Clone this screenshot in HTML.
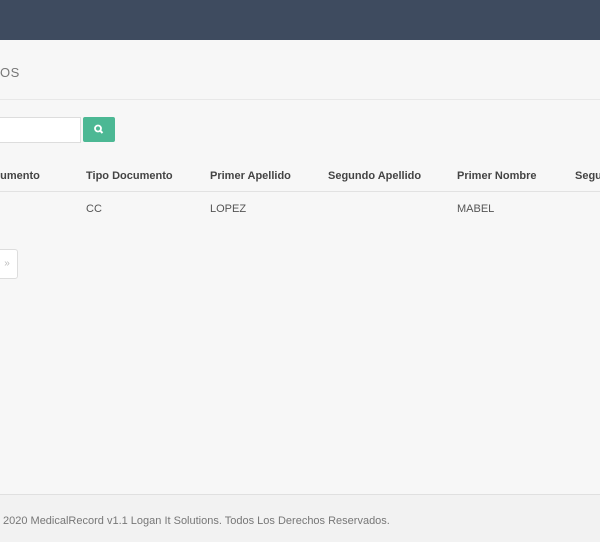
<!DOCTYPE html>
<html><head><style>
body{margin:0;width:600px;height:541px;overflow:hidden;background:#f7f7f7;font-family:"Liberation Sans",sans-serif;position:relative;color:#555}
.top{position:absolute;left:0;top:0;width:600px;height:40px;background:#3e4b5f}
.t{position:absolute;white-space:nowrap;font-size:11px}
</style></head><body>
<div class="top"></div>
<div class="t" style="left:0;top:65px;font-size:13px;color:#777;letter-spacing:0.5px">OS</div>
<div style="position:absolute;left:0;top:99px;width:600px;height:1px;background:#e8e8e8"></div>
<div style="position:absolute;left:-2px;top:117px;width:81px;height:24px;background:#fff;border:1px solid #ddd"></div>
<div style="position:absolute;left:83px;top:117px;width:32px;height:25px;background:#4cb894;border-radius:2px">
<svg width="32" height="25" viewBox="0 0 32 25"><circle cx="15" cy="11.5" r="3" fill="none" stroke="#fff" stroke-width="1.8"/><line x1="17.2" y1="13.7" x2="19.5" y2="16" stroke="#fff" stroke-width="2"/></svg></div>
<div class="t" style="left:-6px;top:170px;font-weight:bold;color:#444">cumento</div>
<div class="t" style="left:86px;top:170px;font-weight:bold;color:#444">Tipo Documento</div>
<div class="t" style="left:210px;top:170px;font-weight:bold;color:#444">Primer Apellido</div>
<div class="t" style="left:328px;top:170px;font-weight:bold;color:#444">Segundo Apellido</div>
<div class="t" style="left:457px;top:170px;font-weight:bold;color:#444">Primer Nombre</div>
<div class="t" style="left:575px;top:170px;font-weight:bold;color:#444">Segundo</div>
<div style="position:absolute;left:0;top:191px;width:600px;height:1px;background:#e2e2e2"></div>
<div class="t" style="left:86px;top:203px">CC</div>
<div class="t" style="left:210px;top:203px">LOPEZ</div>
<div class="t" style="left:457px;top:203px">MABEL</div>
<div style="position:absolute;left:-4px;top:249px;width:20px;height:28px;background:#fff;border:1px solid #ddd;border-radius:0 3px 3px 0;color:#bbb;font-size:10px;line-height:28px;text-align:center">»</div>
<div style="position:absolute;left:0;top:494px;width:600px;height:47px;background:#f2f2f2;border-top:1px solid #e0e0e0"></div>
<div class="t" style="left:3px;top:515px;color:#777;font-size:11px">2020 MedicalRecord v1.1 Logan It Solutions. Todos Los Derechos Reservados.</div>
</body></html>
